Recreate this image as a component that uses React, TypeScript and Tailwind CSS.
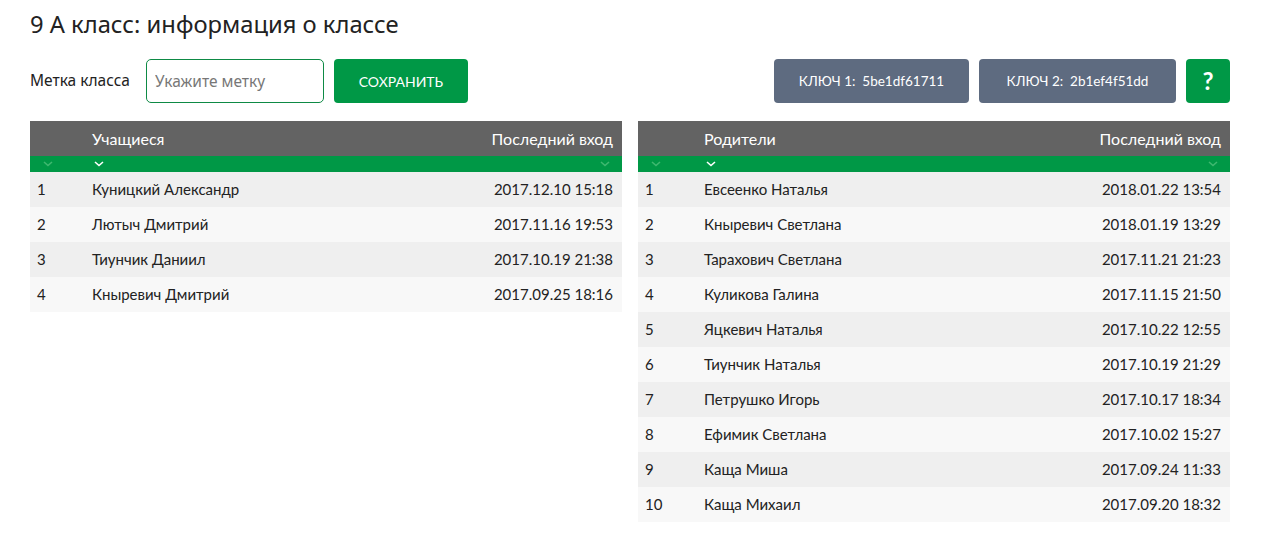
import { useState } from "react";

type Row = { name: string; date: string };

const students: Row[] = [
  { name: "Куницкий Александр", date: "2017.12.10 15:18" },
  { name: "Лютыч Дмитрий", date: "2017.11.16 19:53" },
  { name: "Тиунчик Даниил", date: "2017.10.19 21:38" },
  { name: "Кныревич Дмитрий", date: "2017.09.25 18:16" },
];

const parents: Row[] = [
  { name: "Евсеенко Наталья", date: "2018.01.22 13:54" },
  { name: "Кныревич Светлана", date: "2018.01.19 13:29" },
  { name: "Тарахович Светлана", date: "2017.11.21 21:23" },
  { name: "Куликова Галина", date: "2017.11.15 21:50" },
  { name: "Яцкевич Наталья", date: "2017.10.22 12:55" },
  { name: "Тиунчик Наталья", date: "2017.10.19 21:29" },
  { name: "Петрушко Игорь", date: "2017.10.17 18:34" },
  { name: "Ефимик Светлана", date: "2017.10.02 15:27" },
  { name: "Каща Миша", date: "2017.09.24 11:33" },
  { name: "Каща Михаил", date: "2017.09.20 18:32" },
];

const Chevron = ({ className }: { className: string }) => (
  <svg viewBox="0 0 10 6" className={className} fill="none">
    <path d="M1 1l4 3.5L9 1" stroke="currentColor" strokeWidth="1.6" />
  </svg>
);

const PeopleTable = ({
  title,
  rows,
  numCol,
}: {
  title: string;
  rows: Row[];
  numCol: string;
}) => (
  <div className="flex-1">
    <div className="flex h-[35px] items-center bg-[#636363] text-[16px] text-white">
      <div className={numCol} />
      <div className="flex-1">{title}</div>
      <div className="pr-[9px]">Последний вход</div>
    </div>
    <div className="flex h-[16px] items-center bg-[#009846]">
      <div className={numCol + " pl-[13px]"}>
        <Chevron className="h-[6px] w-[10px] text-[#3fb870]" />
      </div>
      <div className="flex-1 pl-[2px]">
        <Chevron className="h-[6px] w-[10px] text-white" />
      </div>
      <div className="pr-[12px]">
        <Chevron className="h-[6px] w-[10px] text-[#3fb870]" />
      </div>
    </div>
    {rows.map((r, i) => (
      <div
        key={i}
        className={
          "flex h-[35px] items-center text-[15px] text-[#222] " +
          (i % 2 === 0 ? "bg-[#efefef]" : "bg-[#f8f8f8]")
        }
      >
        <div className={numCol + " pl-[7px]"}>{i + 1}</div>
        <div className="flex-1">{r.name}</div>
        <div className="pr-[9px]">{r.date}</div>
      </div>
    ))}
  </div>
);

export default function App() {
  const [label, setLabel] = useState("");

  return (
    <div className="min-h-[549px] bg-white pl-[30px] pt-[6px] font-['Lato','Noto_Sans',sans-serif] text-[#222]">
      <div className="w-[1200px]">
        <h1 className="font-['Noto_Sans',sans-serif] text-[23.75px] leading-[36px] text-[#222]">
          9 А класс: информация о классе
        </h1>

        <div className="mt-[17px] flex items-center">
          <span className="mr-[16px] font-['Noto_Sans',sans-serif] text-[15.5px]">Метка класса</span>
          <input
            value={label}
            onChange={(e) => setLabel(e.target.value)}
            placeholder="Укажите метку"
            className="h-[44px] w-[178px] rounded-[5px] border border-[#0e8a45] px-[8px] font-['Noto_Sans',sans-serif] text-[15.5px] outline-none placeholder:text-[#777]"
          />
          <button className="ml-[10px] h-[44px] w-[134px] rounded-[4px] bg-[#009846] text-[14px] text-white">
            СОХРАНИТЬ
          </button>

          <div className="ml-auto flex gap-[10px]">
            <button className="h-[44px] w-[195px] rounded-[4px] bg-[#5e6b80] text-[13.5px] text-white">
              КЛЮЧ 1:&nbsp; 5be1df61711
            </button>
            <button className="h-[44px] w-[197px] rounded-[4px] bg-[#5e6b80] text-[13.5px] text-white">
              КЛЮЧ 2:&nbsp; 2b1ef4f51dd
            </button>
            <button className="h-[44px] w-[44px] rounded-[4px] bg-[#009846] text-[24px] font-bold text-white">
              ?
            </button>
          </div>
        </div>

        <div className="mt-[18px] flex items-start gap-[16px]">
          <PeopleTable title="Учащиеся" rows={students} numCol="w-[62px]" />
          <PeopleTable title="Родители" rows={parents} numCol="w-[66px]" />
        </div>
      </div>
    </div>
  );
}
